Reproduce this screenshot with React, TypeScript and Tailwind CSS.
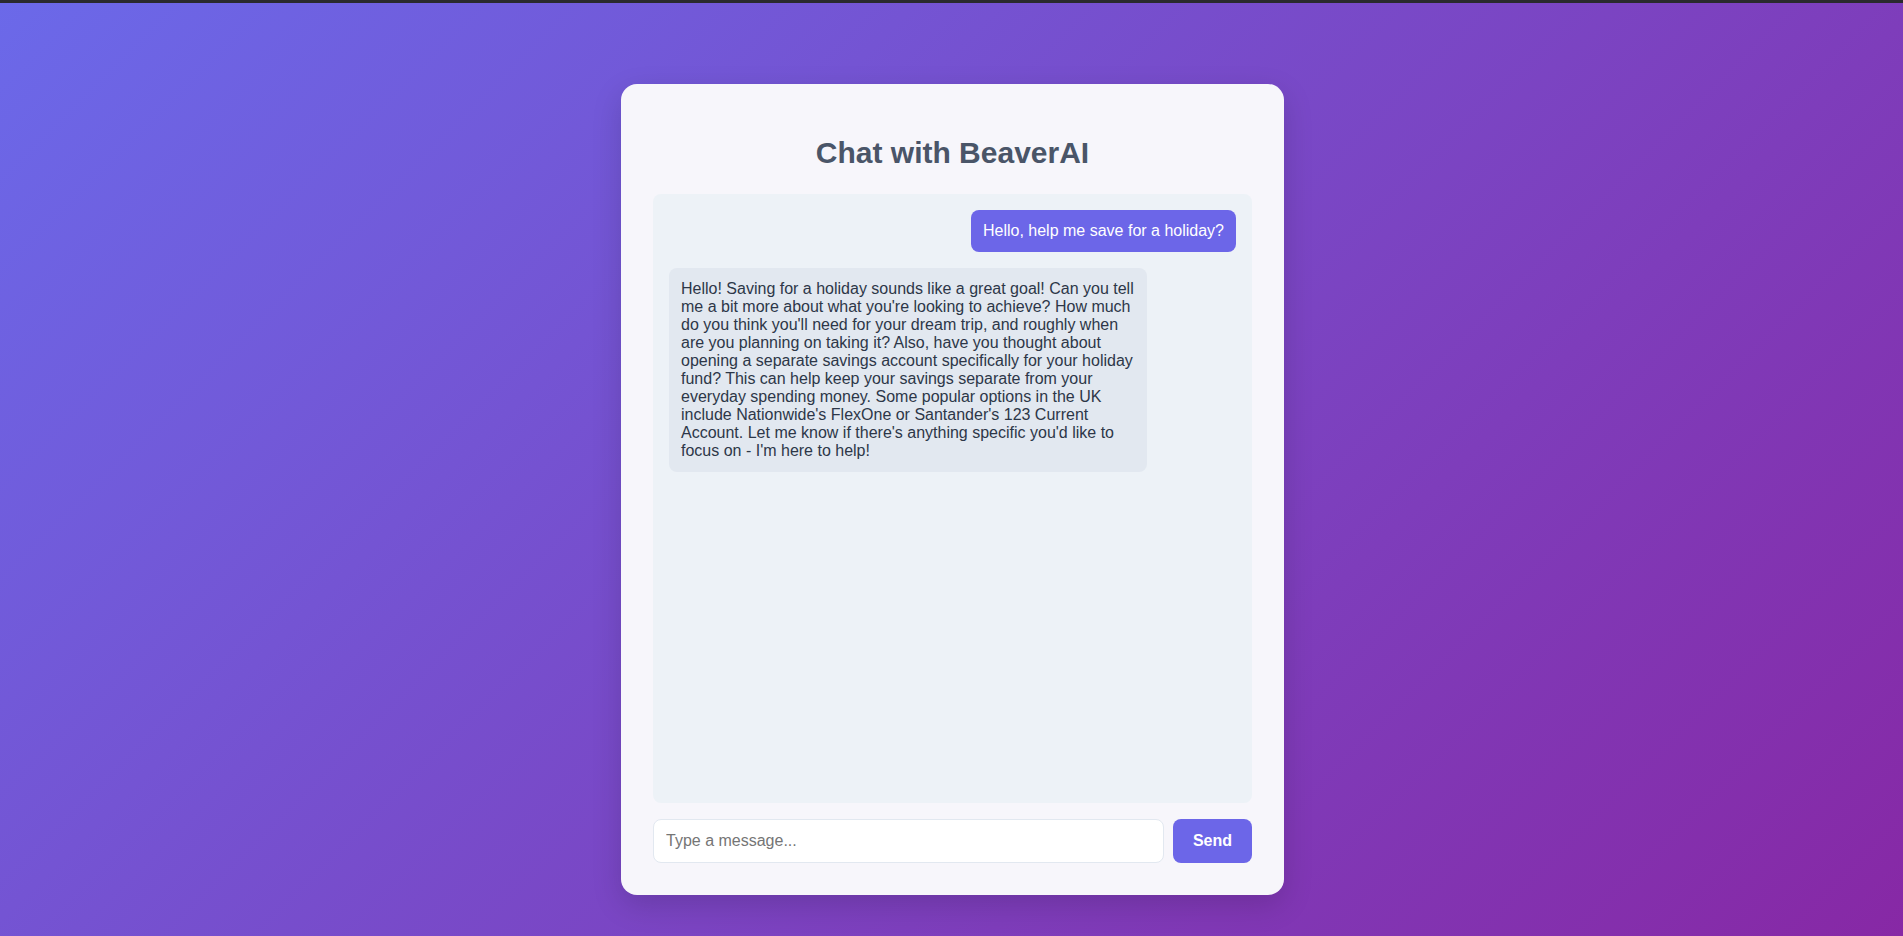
import React, { useState } from "react";

type Msg = { role: "user" | "ai"; text: string };

const messages: Msg[] = [
  { role: "user", text: "Hello, help me save for a holiday?" },
  {
    role: "ai",
    text: "Hello! Saving for a holiday sounds like a great goal! Can you tell me a bit more about what you're looking to achieve? How much do you think you'll need for your dream trip, and roughly when are you planning on taking it? Also, have you thought about opening a separate savings account specifically for your holiday fund? This can help keep your savings separate from your everyday spending money. Some popular options in the UK include Nationwide's FlexOne or Santander's 123 Current Account. Let me know if there's anything specific you'd like to focus on - I'm here to help!",
  },
];

export default function App() {
  const [input, setInput] = useState("");

  return (
    <div className="min-h-screen flex flex-col bg-[linear-gradient(135deg,#6b69e9_0%,#8728a5_100%)] font-['Liberation_Sans',Arial,sans-serif]">
      <div className="h-[3px] bg-[#2a2a2e]" />
      <div className="flex justify-center pt-[81px] pb-[42px] pl-[2px]">
        <div className="w-[663px] bg-[#f7f6fb] rounded-2xl shadow-[0_10px_30px_rgba(0,0,0,0.15)] px-8 pt-8 pb-8 flex flex-col">
          <h1 className="mt-5 mb-6 text-center text-[30px] leading-[34px] font-bold text-[#4a5568]">
            Chat with BeaverAI
          </h1>

          <div className="h-[609px] bg-[#edf2f7] rounded-lg p-4 flex flex-col gap-4 overflow-y-auto">
            {messages.map((m, i) => (
              <div
                key={i}
                className={
                  m.role === "user"
                    ? "self-end max-w-[478px] bg-[#6c66e8] text-white rounded-lg px-3 py-3 text-base leading-[18px]"
                    : "self-start max-w-[478px] bg-[#e2e8f0] text-[#2d3748] rounded-lg px-3 py-3 text-base leading-[18px]"
                }
              >
                {m.text}
              </div>
            ))}
          </div>

          <div className="mt-4 flex gap-[9px]">
            <input
              value={input}
              onChange={(e) => setInput(e.target.value)}
              placeholder="Type a message..."
              className="flex-1 h-[44px] bg-white border border-[#e2e8f0] rounded-lg px-3 text-base text-[#2d3748] placeholder:text-[#757575] outline-none"
            />
            <button className="h-[44px] w-[79px] bg-[#6c66e8] text-white font-bold text-base rounded-lg">
              Send
            </button>
          </div>
        </div>
      </div>
    </div>
  );
}
